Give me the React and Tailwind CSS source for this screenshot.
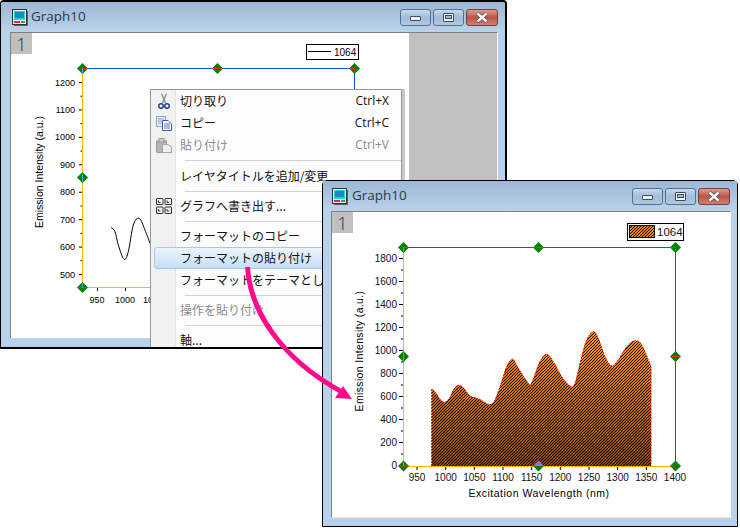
const SANS = { fontFamily: '"Liberation Sans", Arial, sans-serif' };

// page coordinates of the curves, read off the screenshot
const bigCurve = [[431.7, 389.3], [435, 391.7], [440, 399.3], [445, 402.3], [450, 397.3], [453.3, 390], [458.3, 385.3], [463.3, 387.7], [470, 396], [478.3, 398.7], [485, 402.7], [490, 404.7], [495, 400], [501.7, 381.7], [506.7, 366.7], [512.7, 359.3], [518.3, 368.3], [528.3, 383.3], [531.7, 382.7], [540, 361.7], [546.7, 354.3], [553.3, 361.7], [561.7, 376.7], [570, 386], [575, 383.3], [581.7, 356.7], [586.7, 340], [593.3, 331.7], [598.3, 338.3], [605, 356.7], [611.7, 366], [618.3, 360], [623.3, 351.7], [630, 343.3], [636.7, 340.7], [641.7, 345], [648.3, 360], [651, 366.7]];
const smallCurve = [[111, 227.3], [115, 231.7], [118.3, 245], [124, 259.3], [128.3, 251.7], [133.3, 225], [139.3, 218.3], [145, 230], [150, 243.3]];

function smooth(pts) {
  let d = `M${pts[0][0]} ${pts[0][1]}`;
  for (let i = 0; i < pts.length - 1; i++) {
    const p0 = pts[i - 1] || pts[i];
    const p1 = pts[i];
    const p2 = pts[i + 1];
    const p3 = pts[i + 2] || p2;
    d += `C${p1[0] + (p2[0] - p0[0]) / 6} ${p1[1] + (p2[1] - p0[1]) / 6} ${p2[0] - (p3[0] - p1[0]) / 6} ${p2[1] - (p3[1] - p1[1]) / 6} ${p2[0]} ${p2[1]}`;
  }
  return d;
}

function Handle({ x, y, h, v, purple }) {
  const r = 5.5;
  return (
    <g>
      {purple && <path d={`M${x - r} ${y} L${x} ${y - r} L${x + r} ${y} Z`} fill="#b060ff" />}
      <path d={purple ? `M${x - r} ${y} L${x + r} ${y} L${x} ${y + r} Z` : `M${x - r} ${y} L${x} ${y - r} L${x + r} ${y} L${x} ${y + r} Z`} fill="#008000" />
      {h && <path d={`M${x + h[0]} ${y}H${x + h[1]}`} stroke="#f03000" strokeWidth="1" />}
      {v && <path d={`M${x} ${y + v[0]}V${y + v[1]}`} stroke={v[2]} strokeWidth="1" />}
    </g>
  );
}

function WinIcon() {
  return (
    <svg width="16" height="17" viewBox="0 0 16 17" className="shrink-0">
      <rect x="0.5" y="0.5" width="14" height="15" fill="#f4f0e8" stroke="#303030" />
      <rect x="2" y="2" width="11" height="9" fill="#10d8e8" />
      <path d="M3 4H12M3 6H12M3 8H12" stroke="#204090" strokeWidth="1" />
      <path d="M2 13H8" stroke="#e02060" strokeWidth="2" />
      <path d="M9 13H13" stroke="#40a040" strokeWidth="2" />
      <path d="M15.5 2V16.5H2" stroke="#606060" fill="none" />
    </svg>
  );
}

function CaptionButtons() {
  return (
    <div className="flex gap-[2px]">
      <div className="w-[31px] h-[17px] rounded-[3px] border border-[#52708f] bg-linear-to-b from-[#c8d9ec] via-[#a3bcd8] to-[#b0c8e0] flex items-center justify-center">
        <div className="w-[11px] h-[5px] mt-[3px] bg-[#f2f5f8] border border-[#3c4a5a] rounded-[1px]" />
      </div>
      <div className="w-[31px] h-[17px] rounded-[3px] border border-[#52708f] bg-linear-to-b from-[#c8d9ec] via-[#a3bcd8] to-[#b0c8e0] flex items-center justify-center">
        <div className="w-[11px] h-[9px] bg-[#f2f5f8] border border-[#3c4a5a] rounded-[1px] flex items-center justify-center">
          <div className="w-[7px] h-[4px] bg-[#a3bcd8] border border-[#3c4a5a]" />
        </div>
      </div>
      <div className="w-[32px] h-[17px] rounded-[3px] border border-[#7a3c3c] bg-linear-to-b from-[#dc9a8e] via-[#bd5546] to-[#cc8072] flex items-center justify-center">
        <svg width="14" height="11" viewBox="0 0 14 11">
          <path d="M2.5 1.5L11.5 9.5M11.5 1.5L2.5 9.5" stroke="#4a4a4a" strokeWidth="4" />
          <path d="M2.5 1.5L11.5 9.5M11.5 1.5L2.5 9.5" stroke="#fff" strokeWidth="2.4" />
        </svg>
      </div>
    </div>
  );
}

function TitleBar({ h, pl, pr, gap }) {
  return (
    <div className={`flex items-center justify-between bg-linear-to-b from-[#9cb7d5] to-[#bbd2ea] ${h} ${pl} ${pr}`}>
      <div className={`flex items-center ${gap}`}>
        <WinIcon />
        <span className="text-[13.5px] leading-none text-[#28384c]" style={{ fontFamily: '"Open Sans", sans-serif' }}>Graph10</span>
      </div>
      <CaptionButtons />
    </div>
  );
}

function LayerTab() {
  return (
    <div className="absolute left-0 top-0 w-[21px] h-[21px] bg-[#c0c0c0] flex items-center justify-center text-[18px] leading-none font-light text-[#303030]" style={{ fontFamily: '"Open Sans", sans-serif' }}>1</div>
  );
}

function SmallPlot() {
  const yTicks = [1200, 1100, 1000, 900, 800, 700, 600, 500];
  const yOf = (v) => 82 + (1200 - v) * 0.2743;
  return (
    <svg width="398" height="304" viewBox="11 33 398 304" className="block" style={SANS}>
      <rect x="306.5" y="44.5" width="52" height="15" fill="#fff" stroke="#000" />
      <path d="M308 51.5H331" stroke="#000" />
      <text x="334" y="55.5" fontSize="10" fill="#000">1064</text>

      <rect x="82" y="68" width="273" height="1" fill="#0050ff" />
      <rect x="354" y="68" width="1" height="22" fill="#0050ff" />
      <rect x="82" y="68" width="1" height="220" fill="#ffb900" />
      <rect x="82" y="287" width="278" height="1" fill="#ffb900" />
      {yTicks.map((v) => (
        <g key={v}>
          <path d={`M79 ${yOf(v) + 0.5}H82`} stroke="#000" />
          <path d={`M80.5 ${yOf(v - 50) + 0.5}H82`} stroke="#000" />
          <text x="75" y={yOf(v) + 3.5} fontSize="9" textAnchor="end" fill="#000">{v}</text>
        </g>
      ))}
      {[950, 1000, 1050].map((v) => (
        <g key={v}>
          <path d={`M${97 + (v - 950) * 0.56 + 0.5} 288V291`} stroke="#000" />
          <text x={97 + (v - 950) * 0.56} y="303" fontSize="9" textAnchor="middle" fill="#000">{v}</text>
        </g>
      ))}
      <text transform="translate(43 172) rotate(-90)" fontSize="10.5" textAnchor="middle" fill="#000">Emission Intensity (a.u.)</text>
      <path d={smooth(smallCurve)} stroke="#000" strokeWidth="1" fill="none" />

      <Handle x={82.5} y={68.5} h={[0, 5]} v={[0, 4, "#20c0e0"]} />
      <Handle x={217.5} y={68.5} h={[-5, 5]} />
      <Handle x={354.5} y={68.5} h={[-5, 0]} v={[0, 4, "#f03000"]} />
      <Handle x={82.5} y={177.5} v={[-4, 4, "#20c0e0"]} />
      <Handle x={82.5} y={287.5} h={[-4, 4]} v={[-4, 0, "#20c0e0"]} />
    </svg>
  );
}

function BigPlot() {
  const yTicks = [0, 200, 400, 600, 800, 1000, 1200, 1400, 1600, 1800];
  const xTicks = [950, 1000, 1050, 1100, 1150, 1200, 1250, 1300, 1350, 1400];
  const yOf = (v) => 465.5 - v * 0.115;
  const xOf = (v) => 417 + (v - 950) * 0.5733;
  const top = smooth(bigCurve);
  return (
    <svg width="398" height="305" viewBox="332 212 398 305" className="block" style={SANS}>
      <defs>
        <linearGradient id="orangeFade" gradientUnits="userSpaceOnUse" x1="0" y1="345" x2="0" y2="466">
          <stop offset="0" stopColor="#ff8c00" />
          <stop offset="1" stopColor="#804200" />
        </linearGradient>
        <pattern id="hatch" patternUnits="userSpaceOnUse" width="3" height="3">
          <path d="M-1 1L1 -1M0 3L3 0M2 4L4 2" stroke="#000" strokeWidth="1" />
        </pattern>
      </defs>

      <rect x="627.5" y="223.5" width="56" height="17" fill="#fff" stroke="#000" />
      <rect x="629.5" y="225.5" width="25" height="12" fill="#f08000" stroke="#000" />
      <rect x="630" y="226" width="24" height="11" fill="url(#hatch)" />
      <text x="657" y="236" fontSize="11.5" fill="#101010">1064</text>

      <path d={`${top}V466H431.7Z`} fill="url(#orangeFade)" />
      <path d={`${top}V466H431.7Z`} fill="url(#hatch)" />
      <path d={`M431.7 466V389.3${top.replace(/^M[^C]+/, "")}V466`} fill="none" stroke="#ff0000" strokeWidth="1" strokeDasharray="2 1" />

      {yTicks.map((v) => (
        <g key={v}>
          <path d={`M399 ${yOf(v)}H403`} stroke="#000" />
          {v < 1800 && <path d={`M401 ${yOf(v + 100)}H403`} stroke="#000" />}
          <text x="397" y={yOf(v) + 3.5} fontSize="10" textAnchor="end" fill="#101010">{v}</text>
        </g>
      ))}
      {xTicks.map((v) => (
        <g key={v}>
          <path d={`M${xOf(v)} 467V470`} stroke="#000" />
          <text x={xOf(v)} y="481" fontSize="10" textAnchor="middle" fill="#101010">{v}</text>
        </g>
      ))}
      <text transform="translate(363 351) rotate(-90)" fontSize="10.5" letterSpacing="0.35" textAnchor="middle" fill="#000">Emission Intensity (a.u.)</text>
      <text x="539" y="497" fontSize="10.5" letterSpacing="0.5" textAnchor="middle" fill="#000">Excitation Wavelength (nm)</text>

      <rect x="403" y="247" width="273" height="1" fill="#0050ff" />
      <rect x="675" y="247" width="1" height="219" fill="#0050ff" />
      <rect x="403" y="247" width="1" height="220" fill="#ffb900" />
      <rect x="403" y="466" width="272" height="1" fill="#ffb900" />

      <Handle x={403.5} y={247.5} h={[0, 5]} v={[0, 4, "#20c0e0"]} />
      <Handle x={538.5} y={247.5} h={[-5, 5]} />
      <Handle x={675.5} y={247.5} h={[-5, 0]} v={[0, 4, "#f03000"]} />
      <Handle x={403.5} y={356.5} v={[-4, 4, "#20c0e0"]} />
      <Handle x={675.5} y={356.5} h={[-4, 4]} />
      <Handle x={403.5} y={466} h={[-4, 5]} v={[-4, 0, "#20c0e0"]} />
      <Handle x={538.5} y={466} purple />
      <Handle x={675.5} y={466} h={[-5, 0]} />
    </svg>
  );
}

function ScissorsIcon() {
  return (
    <svg width="12" height="17" viewBox="0 0 12 17">
      <path d="M3.5 0.5L7.5 10M8.5 0.5L4.5 10" stroke="#8a8f98" strokeWidth="1.4" />
      <circle cx="3" cy="13" r="2.2" fill="none" stroke="#24408c" strokeWidth="1.5" />
      <circle cx="9" cy="13" r="2.2" fill="none" stroke="#24408c" strokeWidth="1.5" />
    </svg>
  );
}

function CopyIcon() {
  return (
    <svg width="16" height="15" viewBox="0 0 16 15">
      <rect x="0.5" y="0.5" width="9" height="10" fill="#e8f0fa" stroke="#88a4cc" />
      <path d="M2 3H8M2 5H8M2 7H6" stroke="#88a4cc" />
      <path d="M6.5 4.5H12L15.5 8V14.5H6.5Z" fill="#fff" stroke="#3c5c9c" />
      <path d="M8 8H14M8 10H14M8 12H14" stroke="#5878b0" />
    </svg>
  );
}

function PasteIcon() {
  return (
    <svg width="16" height="15" viewBox="0 0 16 15">
      <rect x="0.5" y="2.5" width="10" height="12" rx="1" fill="#b4b4b4" stroke="#999" />
      <rect x="3" y="0.5" width="5" height="3.5" fill="#d0d0d0" stroke="#999" />
      <path d="M6.5 6.5H12L15.5 9V14.5H6.5Z" fill="#eee" stroke="#a4a4a4" />
    </svg>
  );
}

function ExportIcon() {
  return (
    <svg width="16" height="16" viewBox="0 0 16 16">
      <g fill="none" stroke="#303030">
        <rect x="0.5" y="0.5" width="6.5" height="6" rx="0.5" />
        <rect x="9" y="0.5" width="6.5" height="6" rx="0.5" />
        <rect x="0.5" y="9" width="6.5" height="6.5" rx="0.5" />
        <rect x="9" y="9" width="6.5" height="6.5" rx="0.5" />
        <path d="M2.5 2.5V4.5H4.5M11 2.5V4.5H13M2.5 11V13H4.5M11 11V13H13" />
      </g>
    </svg>
  );
}

function MenuItem({ label, shortcut, icon, disabled, active }) {
  return (
    <div className={`relative flex items-center justify-between h-[22px] text-[12px] leading-none pl-[29px] pr-[12px] ${disabled ? "text-[#8d8d8d]" : "text-[#111]"}`}>
      {active && <div className="absolute left-[3px] -right-[4px] top-0 bottom-0 rounded-[3px] border border-[#a8c8e8] bg-linear-to-b from-[#edf5fd] to-[#c4dff8]" />}
      {icon && <div className="absolute left-0 top-0 bottom-0 w-[25px] flex items-center justify-center">{icon}</div>}
      <span className="relative whitespace-nowrap">{label}</span>
      {shortcut && <span className="relative" style={{ fontFamily: '"Open Sans", sans-serif' }}>{shortcut}</span>}
    </div>
  );
}

function MenuSep({ h }) {
  return (
    <div className={`flex items-center pl-[34px] ${h}`}>
      <div className="flex-1 h-px bg-[#d4d4d4]" />
    </div>
  );
}

function ContextMenu() {
  return (
    <div className="absolute left-[149px] top-[87px] w-[252px] h-[262px] bg-[#fcfcfc] border border-[#979797] shadow-[3px_0_0_#c8c8c8]" style={{ fontFamily: '"Noto Sans CJK JP", sans-serif' }}>
      <div className="absolute left-0 top-0 bottom-0 w-[25px] bg-[#f1f1f1] border-r border-[#e2e3e3]" />
      <div className="relative">
        <MenuItem label="切り取り" shortcut="Ctrl+X" icon={<ScissorsIcon />} />
        <MenuItem label="コピー" shortcut="Ctrl+C" icon={<CopyIcon />} />
        <MenuItem label="貼り付け" shortcut="Ctrl+V" icon={<PasteIcon />} disabled />
        <MenuSep h="h-[9px]" />
        <MenuItem label="レイヤタイトルを追加/変更" />
        <MenuSep h="h-[8px]" />
        <MenuItem label="グラフへ書き出す..." icon={<ExportIcon />} />
        <MenuSep h="h-[8px]" />
        <MenuItem label="フォーマットのコピー" />
        <MenuItem label="フォーマットの貼り付け" active />
        <MenuItem label="フォーマットをテーマとして保存" />
        <MenuSep h="h-[8px]" />
        <MenuItem label="操作を貼り付け" disabled />
        <MenuSep h="h-[8px]" />
        <MenuItem label="軸..." />
      </div>
    </div>
  );
}

export default function App() {
  return (
    <div className="relative w-[740px] h-[528px] bg-white overflow-hidden">
      {/* back window */}
      <div className="absolute left-0 top-0 w-[507px] h-[349px] flex flex-col overflow-hidden bg-[#b9d1ea] border-l border-t-2 border-r-2 border-b-2 border-black rounded-t-[4px]">
        <TitleBar h="h-[30px]" pl="pl-[11px]" pr="pr-[7px]" gap="gap-[3px]" />
        <div className="flex-1 flex pl-[9px] pr-[7px] pb-[9px]">
          <div className="flex-1 flex border-l border-t border-[#808080] border-r border-r-white bg-white">
            <div className="relative">
              <SmallPlot />
              <LayerTab />
            </div>
            <div className="flex-1 bg-[#c0c0c0]" />
          </div>
        </div>
        <ContextMenu />
      </div>

      {/* front window */}
      <div className="absolute left-[322px] top-[180px] w-[416px] h-[347px] flex flex-col bg-[#b9d1ea] border border-black rounded-t-[5px]">
        <TitleBar h="h-[30px]" pl="pl-[9px]" pr="pr-[7px]" gap="gap-[4px]" />
        <div className="flex-1 flex pl-[8px] pr-[7px] pb-[8px]">
          <div className="flex-1 border-l border-t border-[#808080] border-r border-r-white border-b border-b-[#e8e8e8] bg-white">
            <div className="relative">
              <BigPlot />
              <LayerTab />
            </div>
          </div>
        </div>
      </div>

      {/* pink arrow across both windows */}
      <svg width="740" height="528" viewBox="0 0 740 528" className="absolute left-0 top-0 pointer-events-none">
        <path d="M247.5 267C250 310 280 358 342 392" stroke="#ff0a8c" strokeWidth="5" fill="none" />
        <path d="M352 399L335 398L343 386Z" fill="#ff0a8c" />
      </svg>
    </div>
  );
}
